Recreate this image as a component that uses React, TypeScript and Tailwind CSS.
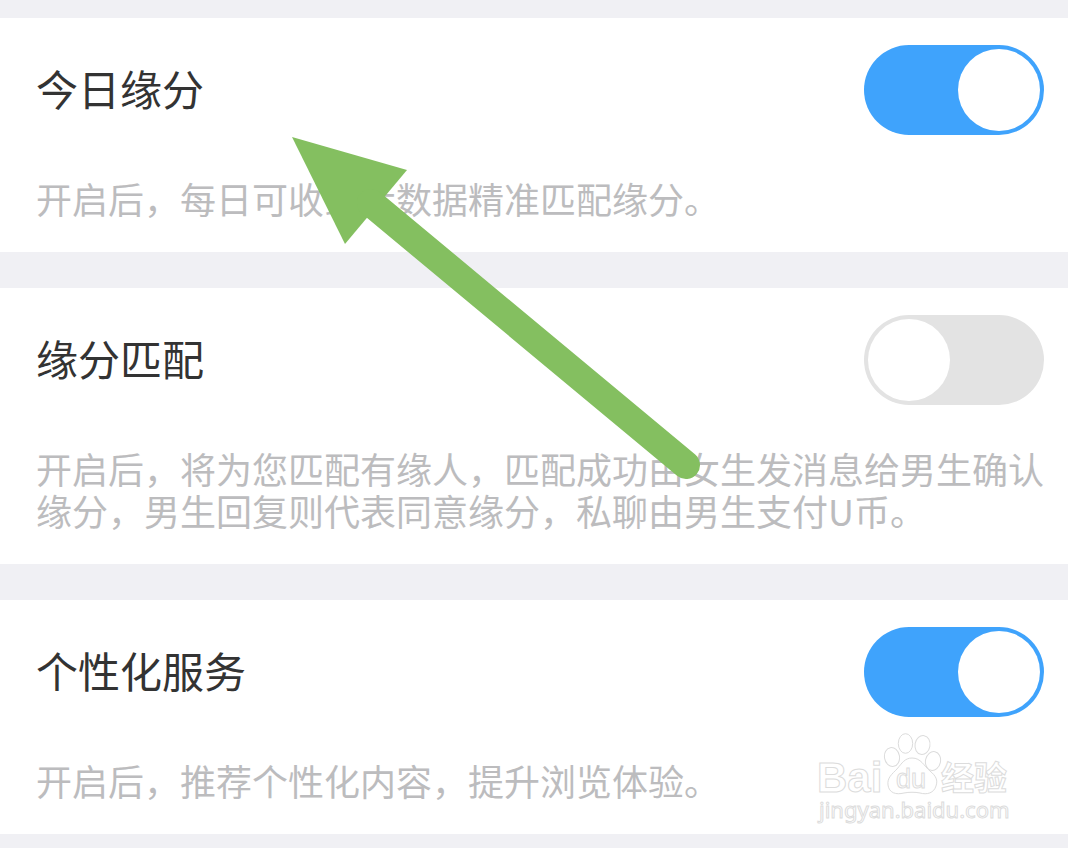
import { useId, useState } from "react";

interface SettingItem {
  id: string;
  title: string;
  description: string;
  enabled: boolean;
}

const SETTINGS: SettingItem[] = [
  {
    id: "daily-match",
    title: "今日缘分",
    description: "开启后，每日可收到大数据精准匹配缘分。",
    enabled: true
  },
  {
    id: "fate-match",
    title: "缘分匹配",
    description: "开启后，将为您匹配有缘人，匹配成功由女生发消息给男生确认缘分，男生回复则代表同意缘分，私聊由男生支付U币。",
    enabled: false
  },
  {
    id: "personalized",
    title: "个性化服务",
    description: "开启后，推荐个性化内容，提升浏览体验。",
    enabled: true
  }
];

interface SettingCardProps {
  item: SettingItem;
  onToggle: () => void;
}

function SettingCard({ item, onToggle }: SettingCardProps) {
  const id = useId();

  return (
    <section className="bg-white pt-[27px] pb-[33px] pl-9 pr-6">
      <div className="flex items-center justify-between">
        <label htmlFor={id} className="pb-1 text-[42px] leading-[60px] text-[#333333]">
          {item.title}
        </label>
        <input
          id={id}
          type="checkbox"
          role="switch"
          checked={item.enabled}
          onChange={onToggle}
          className="appearance-none shrink-0 flex items-center w-[180px] h-[90px] p-1 rounded-full cursor-pointer bg-[#e3e3e3] checked:bg-[#3fa3fc] checked:justify-end before:content-[''] before:size-[82px] before:rounded-full before:bg-white"
        />
      </div>
      <p className="mt-[42px] text-4xl leading-[42px] text-[#bcbcbe]">{item.description}</p>
    </section>
  );
}

function Arrow() {
  return (
    <svg
      aria-hidden="true"
      viewBox="0 0 410 344"
      className="absolute left-[291px] top-[136px] w-[410px] h-[344px] pointer-events-none"
    >
      <path d="M1 1 116 34 54 108Z" fill="#84bf60" />
      <path d="M80 67 395 329" stroke="#84bf60" strokeWidth="28" strokeLinecap="round" />
    </svg>
  );
}

function Watermark() {
  return (
    <svg
      viewBox="0 0 200 96"
      className="absolute right-[54px] bottom-[22px] w-[200px] h-[96px] pointer-events-none"
      fill="#ffffff"
      stroke="#dcdcdc"
      strokeWidth="1"
    >
      <text x="3" y="62" fontSize="42" fontWeight="700" fontFamily="Liberation Sans, sans-serif">Bai</text>
      <ellipse cx="78" cy="27" rx="7.5" ry="9.5" transform="rotate(-10 78 27)" />
      <ellipse cx="91.5" cy="13.5" rx="7.2" ry="9.8" />
      <ellipse cx="108.5" cy="15" rx="7.5" ry="9.5" transform="rotate(10 108.5 15)" />
      <ellipse cx="119" cy="31" rx="7.5" ry="9.5" transform="rotate(12 119 31)" />
      <path d="M98 28C107 28 110 36 116 41C122 46 124 50 122 56C120 63 113 65 106 63C101 62 95 62 90 63C82 65 75 63 74 55C73 48 78 44 83 39C88 33 91 28 98 28Z" />
      <text x="82" y="58" fontSize="27" fontFamily="Liberation Sans, sans-serif">du</text>
      <text x="127" y="60" fontSize="33" fontWeight="700" fontFamily="Noto Sans CJK SC, sans-serif">经验</text>
      <text x="5" y="88" fontSize="22" fontFamily="Noto Sans, sans-serif">jingyan.baidu.com</text>
    </svg>
  );
}

export default function App() {
  const [settings, setSettings] = useState(SETTINGS);

  const toggle = (id: string) => {
    setSettings(prev => prev.map(s => (s.id === id ? { ...s, enabled: !s.enabled } : s)));
  };

  return (
    <div className="min-h-screen bg-[#f0f0f4] font-['Noto_Sans_CJK_SC',sans-serif]">
      <main className="relative flex flex-col gap-9 pt-[18px] pb-[14px]">
        {settings.map(item => (
          <SettingCard key={item.id} item={item} onToggle={() => toggle(item.id)} />
        ))}
        <Arrow />
        <Watermark />
      </main>
    </div>
  );
}
